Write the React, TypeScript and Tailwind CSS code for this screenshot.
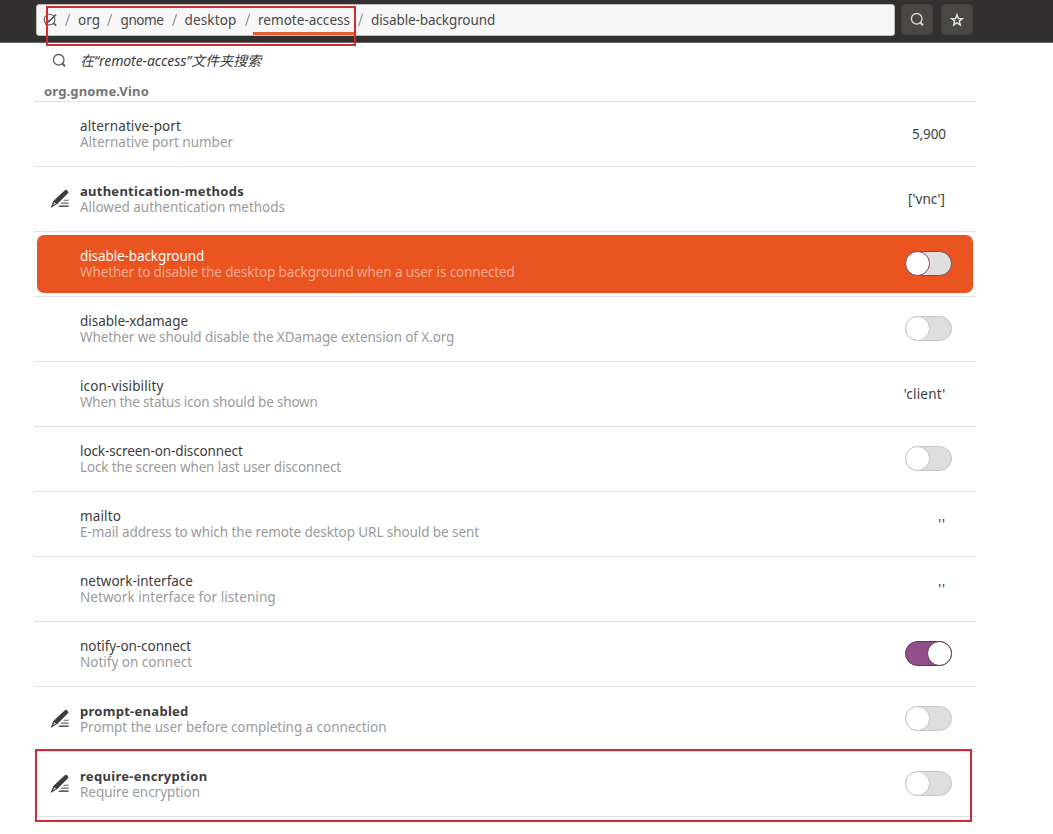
import React from "react";

type Setting = {
  name: string;
  description: string;
  nameTracking: string;
  descTracking: string;
  value?: string;
  valueClass?: string;
  on?: boolean;
  modified?: boolean;
  selected?: boolean;
};

const settings: Setting[] = [
  { name: "alternative-port", description: "Alternative port number", nameTracking: "tracking-[0.12px]", descTracking: "tracking-[-0.03px]", value: "5,900", valueClass: "tracking-[-0.1px]" },
  { name: "authentication-methods", description: "Allowed authentication methods", nameTracking: "tracking-[0.26px]", descTracking: "tracking-[-0.03px]", value: "['vnc']", valueClass: "pr-px" , modified: true },
  { name: "disable-background", description: "Whether to disable the desktop background when a user is connected", nameTracking: "tracking-[-0.1px]", descTracking: "tracking-[-0.125px]", on: false, selected: true },
  { name: "disable-xdamage", description: "Whether we should disable the XDamage extension of X.org", nameTracking: "tracking-[-0.03px]", descTracking: "tracking-[-0.1px]", on: false },
  { name: "icon-visibility", description: "When the status icon should be shown", nameTracking: "tracking-[0.12px]", descTracking: "tracking-[-0.19px]", value: "'client'", valueClass: "tracking-[0.25px] pr-[0.5px]" },
  { name: "lock-screen-on-disconnect", description: "Lock the screen when last user disconnect", nameTracking: "tracking-[-0.1px]", descTracking: "tracking-[-0.135px]", on: false },
  { name: "mailto", description: "E-mail address to which the remote desktop URL should be sent", nameTracking: "tracking-[0.13px]", descTracking: "tracking-[-0.083px]", value: "''", valueClass: "tracking-[0.9px] -mt-px" },
  { name: "network-interface", description: "Network interface for listening", nameTracking: "tracking-[0px]", descTracking: "tracking-[0.06px]", value: "''", valueClass: "tracking-[0.9px] -mt-px" },
  { name: "notify-on-connect", description: "Notify on connect", nameTracking: "tracking-[-0.05px]", descTracking: "tracking-[0px]", on: true },
  { name: "prompt-enabled", description: "Prompt the user before completing a connection", nameTracking: "tracking-[0.28px]", descTracking: "tracking-[-0.045px]", on: false, modified: true },
  { name: "require-encryption", description: "Require encryption", nameTracking: "tracking-[0.31px]", descTracking: "tracking-[-0.035px]", on: false, modified: true },
];

function SearchIcon({ className }: { className: string }) {
  return (
    <svg viewBox="0 0 16 16" className={className} fill="none" stroke="currentColor">
      <circle cx="7.7" cy="6.8" r="5.3" strokeWidth="1.3" />
      <path d="M11.1 10.3 L14 13.2" strokeWidth="2" />
    </svg>
  );
}

function RootIcon() {
  return (
    <svg viewBox="0 0 16 16" className="size-4" fill="none" stroke="#5a5a5a">
      <circle cx="7.6" cy="7.6" r="5.4" strokeWidth="1.1" />
      <path d="M4.8 7.4 L6.8 9.6 L14 2.6" strokeWidth="1.7" />
      <path d="M11.2 11 L14.2 13.6" strokeWidth="1.7" />
      <path d="M3.2 12.6 L6.8 9.6" strokeWidth="1" />
    </svg>
  );
}

function EditIcon() {
  return (
    <svg viewBox="0 0 20 20" className="size-5" fill="#3d3d3d">
      <path fillRule="evenodd" d="M15.1 0.9 Q16 0.3 16.8 1.1 L18.2 2.7 Q18.8 3.5 18 4.3 L7.3 15 L0.6 19 L3.3 12 Z M4.4 13.2 L3.3 16 L5.9 14.7 Z" />
      <path d="M14.2 10.7 H18.6 V11.8 H13.1 Z M11.8 13.4 H18.6 V14.7 H10.5 Z M9.8 16.2 H18.6 V18 H8 Z" fill="#666" />
    </svg>
  );
}

function Toggle({ on, selected }: { on: boolean; selected?: boolean }) {
  const border = on ? "border-[#5c3a58]" : selected ? "border-[#7a4a62]" : "border-[#c6c6c6]";
  return (
    <div className={`relative h-[25px] w-[47px] rounded-full border ${border} ${on ? "bg-[#924d8b]" : "bg-[#dedede]"}`}>
      <div className={`absolute -top-px size-[25px] rounded-full border bg-white ${border} ${on ? "-right-px" : "-left-px"}`} />
    </div>
  );
}

function Row({ item }: { item: Setting }) {
  return (
    <div className="h-[65px] border-b border-[#e2e2e2] p-[3px]">
      <div className={`flex h-[58px] items-center rounded-[7px] pr-[21px] pl-[13px] ${item.selected ? "bg-[#e95420]" : ""}`}>
        <div className="w-[30px] shrink-0 pb-[1px]">{item.modified && <EditIcon />}</div>
        <div className="min-w-0 flex-1 whitespace-nowrap">
          <div className={`leading-4 ${item.nameTracking} ${item.modified ? "text-[13px] font-bold" : "text-[13.5px]"} ${item.selected ? "text-white" : "text-[#3d3d3d]"}`}>
            {item.name}
          </div>
          <div className={`text-[13.5px] leading-4 ${item.descTracking} ${item.selected ? "text-[#f4aa90]" : "text-[#9b9b9b]"}`}>
            {item.description}
          </div>
        </div>
        {item.value !== undefined ? (
          <div className="pr-[6px] text-[13.5px] leading-4 text-[#3d3d3d]">
            <div className={item.valueClass}>{item.value}</div>
          </div>
        ) : (
          <div className="pb-px">
            <Toggle on={!!item.on} selected={item.selected} />
          </div>
        )}
      </div>
    </div>
  );
}

function Slash({ className }: { className: string }) {
  return (
    <span className={`${className} shrink-0`}>
      <svg viewBox="0 0 6 14" className="h-[14px] w-[6px]" stroke="#929292" fill="none">
        <path d="M4.6 1 L0.6 13" strokeWidth="1.1" />
      </svg>
    </span>
  );
}

export default function App() {
  return (
    <div className="relative h-[834px] w-[1053px] overflow-hidden bg-white font-['Noto_Sans','Noto_Sans_CJK_SC',sans-serif]">
      <header className="flex h-[43px] items-start border-b border-[#68686a] bg-[#323030] pt-[4px] pl-[36px]">
        <div className="flex h-[32px] w-[859px] items-center rounded-[3px] border border-[#bdbbb9] bg-[#f7f7f7] pl-[5px] text-[13.5px] whitespace-nowrap text-[#4a4a4a]">
          <div className="w-[23px] shrink-0"><RootIcon /></div>
          <Slash className="w-[13px]" />
          <span className="w-[29px] shrink-0 tracking-[0.03px]">org</span>
          <Slash className="w-[13.5px]" />
          <span className="w-[51px] shrink-0 tracking-[-0.4px]">gnome</span>
          <Slash className="w-[13px]" />
          <span className="w-[60px] shrink-0 tracking-[0.15px]">desktop</span>
          <Slash className="w-[8.5px]" />
          <span className="flex h-[30px] w-[103px] shrink-0 items-center border-b-3 border-[#e0602f] pt-[3px] pl-[5px] tracking-[0.03px]">remote-access</span>
          <Slash className="ml-[2px] w-[13px]" />
          <span className="tracking-[-0.1px]">disable-background</span>
        </div>
        <button className="ml-[6px] flex h-[31px] w-[32px] items-center justify-center rounded-[4px] border border-[#43413e] bg-[#4a4845] text-[#d8d8d6]">
          <SearchIcon className="size-4" />
        </button>
        <button className="ml-[8px] flex h-[31px] w-[32px] items-center justify-center rounded-[4px] border border-[#43413e] bg-[#4a4845] text-[#e4e4e2]">
          <svg viewBox="0 0 16 16" className="size-4" fill="none" stroke="currentColor" strokeWidth="1.4">
            <path d="M8 2.8 L9.4 6.5 L13.3 6.7 L10.3 9.1 L11.3 12.9 L8 10.8 L4.7 12.9 L5.7 9.1 L2.7 6.7 L6.6 6.5 Z" />
          </svg>
        </button>
      </header>

      <main className="ml-[34px] w-[942px]">
        <div className="flex h-[36px] items-center pl-[17px] text-[#5c5c5c]">
          <SearchIcon className="size-4" />
          <span className="ml-[13px] text-[14px] leading-5 whitespace-nowrap text-[#3d3d3d] italic">
            在“<span className="tracking-[-0.08px]">remote-access</span>”文件夹搜索
          </span>
        </div>
        <div className="h-[23px] border-b border-[#e2e2e2] pt-[4px] pl-[10px] text-[13px] leading-4 font-bold tracking-[0.16px] text-[#757575]">
          org.gnome.Vino
        </div>
        {settings.map((item) => (
          <Row key={item.name} item={item} />
        ))}
      </main>

      <div className="absolute top-[6px] left-[46px] h-[40px] w-[310px] border-2 border-[#d42a32]" />
      <div className="absolute top-[749px] left-[35px] h-[73px] w-[937px] border-2 border-[#cc2a36]" />
    </div>
  );
}
